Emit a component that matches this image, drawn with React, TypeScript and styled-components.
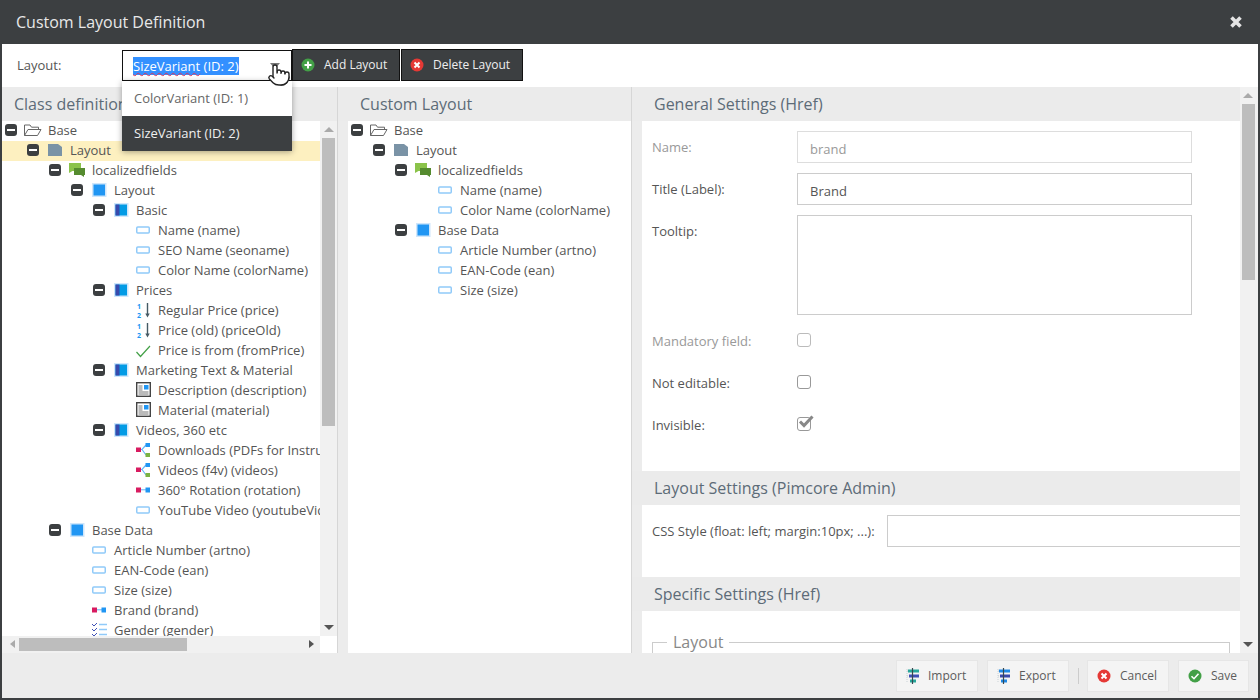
import React from "react";
import styled, { createGlobalStyle } from "styled-components";
import { Pointer } from "lucide-react";

const Global = createGlobalStyle`
  html, body { margin: 0; padding: 0; height: 100%; background: #fff; }
  body { font-family: "Open Sans", "Liberation Sans", sans-serif; font-size: 13px; color: #555; overflow: hidden; }
  * { box-sizing: border-box; }
`;

const Win = styled.div`
  width: 1260px; height: 700px; display: flex; flex-direction: column;
  border: 2px solid #3c3f41; border-top: 0; background: #ececec; overflow: hidden; position: relative;
`;
const TitleBar = styled.header`
  height: 44px; flex: none; background: #3c3f41; margin: 0 -2px; padding: 0 17px 0 16px;
  display: flex; align-items: center; justify-content: space-between;
  color: #e8e8e8; font-size: 16px; font-weight: 400;
`;
const Toolbar = styled.div`
  height: 43px; flex: none; background: #fff; display: flex; align-items: flex-start; padding: 5px 0 0 15px;
`;
const ToolLabel = styled.span`
  width: 105px; line-height: 32px; font-size: 13px; color: #555; flex: none;
`;
const Combo = styled.div`
  width: 170px; height: 31px; margin-top: 1px; border: 1px solid #111; background: #fff; padding: 0 11px 0 10px;
  display: flex; align-items: center; justify-content: space-between; position: relative; flex: none;
`;
const Selected = styled.span`
  background: #3390ff; color: #fff; font-size: 13px; line-height: 18px; white-space: nowrap;
`;
const Wavy = styled.span`
  text-decoration: underline wavy #d8345f 1px; text-underline-offset: 1px;
`;
const Caret = styled.span`
  width: 0; height: 0; border-left: 5px solid transparent; border-right: 5px solid transparent;
  border-top: 6px solid #777;
`;
const Hand = styled.span`
  position: absolute; left: 144px; top: 12px; display: block; line-height: 0; z-index: 4;
`;
const Menu = styled.div`
  position: absolute; left: 120px; top: 81px; width: 170px; z-index: 3; background: #fff;
  box-shadow: 0 1px 6px rgba(0,0,0,.35);
`;
const MenuItem = styled.div<{ $active?: boolean }>`
  height: 35px; line-height: 35px; padding-left: 12px; font-size: 13px;
  background: ${p => (p.$active ? "#3c3f41" : "#fff")};
  color: ${p => (p.$active ? "#f0f0f0" : "#666")};
`;
const DarkBtn = styled.button<{ $w: number }>`
  width: ${p => p.$w}px; height: 32px; border: 1px solid #111; background: #3c3f41; color: #eee; font: 12px "Open Sans", sans-serif;
  display: flex; align-items: center; gap: 9px; padding: 0 0 1px 8px; margin: 0 1px 0 0; flex: none;
`;
const Columns = styled.div`
  height: 566px; flex: none; display: flex; align-items: stretch;
`;
const LeftCol = styled.section`
  width: 336px; flex: none; display: flex; flex-direction: column; border-right: 1px solid #d6d6d6;
`;
const MidCol = styled.section`
  width: 294px; flex: none; display: flex; flex-direction: column; border-right: 1px solid #d6d6d6;
`;
const RightCol = styled.section`
  flex: 1; min-width: 0; display: flex;
`;
const PanelHead = styled.h2`
  height: 34px; flex: none; margin: 0; padding: 0 0 0 12px; background: #ebebeb; color: #5d6b78;
  font-size: 16px; font-weight: 400; line-height: 34px; white-space: nowrap; overflow: hidden;
`;
const MidHead = styled(PanelHead)`
  padding-left: 22px;
`;
const TreeWrap = styled.div`
  flex: 1; min-height: 0; display: flex; background: #fff;
`;
const TreeArea = styled.div`
  flex: 1; min-width: 0; overflow: hidden; background: #fff;
`;
const VBar = styled.div`
  width: 17px; flex: none; background: #f1f1f1; display: flex; flex-direction: column; align-items: center;
`;
const ThumbV = styled.div<{ $h: number; $gap: number }>`
  width: 13px; height: ${p => p.$h}px; margin-top: ${p => p.$gap}px; background: #bdbdbd; flex: none;
`;
const HBar = styled.div`
  height: 17px; flex: none; display: flex; background: #fff;
`;
const HTrack = styled.div`
  flex: 1; background: #f1f1f1; display: flex; align-items: center; padding-left: 17px; position: relative;
`;
const ThumbH = styled.div`
  width: 168px; height: 13px; background: #bdbdbd;
`;
const Corner = styled.div`
  width: 17px; flex: none; background: #fff;
`;
const Arrow = styled.span<{ $dir: "up" | "down" | "left" | "right" }>`
  width: 0; height: 0; flex: none; border: 4px solid transparent;
  ${p => p.$dir === "up" && `border-top-width:0;border-left-width:5px;border-right-width:5px;border-bottom:5px solid #aaa;margin-top:6px;`}
  ${p => p.$dir === "down" && `border-bottom-width:0;border-left-width:5px;border-right-width:5px;border-top:5px solid #555;margin-top:auto;margin-bottom:6px;`}
  ${p => p.$dir === "left" && `border-left-width:0;border-right:5px solid #aaa;position:absolute;left:8px;top:4px;`}
  ${p => p.$dir === "right" && `border-right-width:0;border-left:5px solid #555;position:absolute;right:6px;top:4px;`}
`;
const Row = styled.div<{ $level: number; $sel?: boolean }>`
  height: 20px; padding-bottom: 2px; display: flex; align-items: center; white-space: nowrap; font-size: 13px; color: #555;
  padding-left: ${p => 3 + p.$level * 22}px; background: ${p => (p.$sel ? "#fdf0c0" : "transparent")};
`;
const Toggle = styled.span`
  width: 12px; height: 12px; flex: none; border-radius: 3px; background: #3c3f41; display: flex; align-items: center; justify-content: center;
  &::before { content: ""; width: 8px; height: 2px; background: #fff; }
`;
const NoToggle = styled.span`
  width: 12px; flex: none;
`;
const IconBox = styled.span`
  width: 16px; height: 16px; margin: 0 6px 0 9px; flex: none; display: block; line-height: 0;
  svg { overflow: visible; }
`;
const MidBody = styled.div`
  flex: 1; min-height: 0; padding-left: 10px; display: flex;
`;
const RightMain = styled.div`
  flex: 1; min-width: 0; overflow: hidden; display: flex; flex-direction: column;
`;
const SecHead = styled(PanelHead)`
  padding-left: 22px;
`;
const SecBody = styled.div<{ $h: number }>`
  margin-left: 10px; background: #fff; height: ${p => p.$h}px; flex: none; padding: 10px 0 0 10px; overflow: hidden;
`;
const FormRow = styled.div<{ $top?: boolean }>`
  display: flex; align-items: ${p => (p.$top ? "flex-start" : "center")}; min-height: 32px; margin-bottom: 10px;
`;
const FieldLabel = styled.label<{ $off?: boolean; $w?: number; $top?: boolean }>`
  width: ${p => p.$w ?? 145}px; flex: none; font-size: 13px; line-height: 18px; color: ${p => (p.$off ? "#999" : "#555")}; white-space: nowrap;
  padding-top: ${p => (p.$top ? 7 : 0)}px;
`;
const Input = styled.div<{ $off?: boolean }>`
  width: 395px; height: 32px; border: 1px solid ${p => (p.$off ? "#ddd" : "#ccc")}; padding: 0 12px; line-height: 35px;
  font-size: 13px; color: ${p => (p.$off ? "#999" : "#555")}; background: #fff;
`;
const TextArea = styled(Input)`
  height: 100px;
`;
const WideInput = styled(Input)`
  width: 400px; flex: none; margin-left: 0;
`;
const Check = styled.span<{ $off?: boolean }>`
  width: 14px; height: 14px; display: block; position: relative; border: 1.5px solid ${p => (p.$off ? "#bbb" : "#999")}; border-radius: 3px; background: #fff; margin-top: -2px;
`;
const CheckMark = styled.svg`
  position: absolute; left: 0; top: -3px; overflow: visible;
`;
const Fieldset = styled.div`
  margin-top: 21px; width: 578px; height: 60px; border: 1px solid #ccc; position: relative;
`;
const Legend = styled.span`
  position: absolute; left: 14px; top: -11px; padding: 0 6px; font-size: 16px; line-height: 20px; background: #fff; color: #888;
`;
const Footer = styled.footer`
  flex: 1; display: flex; justify-content: flex-end; align-items: flex-start; padding: 7px 9px 0 0; gap: 9px;
`;
const FootBtn = styled.button<{ $w: number }>`
  width: ${p => p.$w}px; height: 32px; border: 1px solid #e6e6e6; background: #f4f4f4; color: #5c5c5c; font: 12px "Open Sans", sans-serif;
  display: flex; align-items: center; gap: 9px; padding: 0 0 1px 9px; flex: none;
`;
const Sep = styled.span`
  width: 1px; height: 16px; margin: 8px -1px 0 0; background: #ccc; flex: none;
`;
const RightScroll = styled(VBar)`
  width: 18px; padding-right: 2px;
`;
const NumText = styled.text`
  font: 700 7px "Open Sans", sans-serif; fill: #2196f3;
`;

type K = "folder" | "page" | "chat" | "square" | "panel" | "text" | "num" | "check" | "wys" | "multi" | "single" | "list";

const Ico = ({ k }: { k: K }) => {
  const p = { width: 16, height: 16, viewBox: "0 0 16 16" };
  switch (k) {
    case "folder":
      return <svg width={18} height={16} viewBox="2 0 18 16" fill="none" stroke="#666" strokeWidth="1"><path d="M0.5 13.5V3h5.5l1.5 2.2h7v2.3M0.5 13.5h13l3.5-6H4z" /></svg>;
    case "page":
      return <svg {...p}><path d="M0 2h10l4 3v9H0z" fill="#7a93a6" /></svg>;
    case "chat":
      return <svg {...p}><path d="M-1 1h12v8H2.5L-1 11z" fill="#8bc34a" /><path d="M4 6h11v7h-1v2l-3-2H4z" fill="#558b2f" /></svg>;
    case "square":
      return <svg {...p}><rect x="0" y="1" width="14.5" height="14" fill="#cfe6fb" /><rect x="1.5" y="2.5" width="11.5" height="11" fill="#2196f3" /></svg>;
    case "panel":
      return <svg {...p}><rect x="0" y="1" width="14.5" height="14" fill="#cfe6fb" /><rect x="1.5" y="2.5" width="11.5" height="11" fill="#039be5" /><rect x="1.5" y="2.5" width="4" height="11" fill="#3949ab" /></svg>;
    case "text":
      return <svg {...p}><rect x=".75" y="5" width="12.5" height="6" rx="1" fill="#fff" stroke="#90caf9" strokeWidth="1.5" /></svg>;
    case "num":
      return <svg {...p}>
        <NumText x="1" y="6.5">1</NumText>
        <NumText x="1" y="15.5">2</NumText>
        <path d="M11.5 1v11" stroke="#455a64" strokeWidth="1.4" /><path d="M9.3 11.5l2.2 4 2.2-4z" fill="#455a64" />
      </svg>;
    case "check":
      return <svg {...p}><path d="M0.5 10l4 4.5L14 4" fill="none" stroke="#43a047" strokeWidth="1.2" /></svg>;
    case "wys":
      return <svg {...p}><rect x=".7" y=".7" width="13.6" height="13.6" fill="#fff" stroke="#444" strokeWidth="1.4" /><rect x="8" y="3" width="4.5" height="4.5" fill="#2196f3" /><path d="M2.5 4h4M2.5 6h4M2.5 8h4M2.5 10h10M2.5 12h10" stroke="#777" /></svg>;
    case "multi":
      return <svg {...p}><path d="M4 7.5h2L10 3M6 7.5l4 5.5" stroke="#64b5f6" strokeWidth="1.2" fill="none" /><rect x="0" y="5.5" width="5" height="4.5" fill="#d81b60" /><rect x="9.5" y="1" width="4.5" height="4" fill="#2196f3" /><rect x="9.5" y="11" width="4.5" height="4" fill="#7cb342" /></svg>;
    case "single":
      return <svg {...p}><path d="M4 7.8h6" stroke="#64b5f6" /><rect x="0" y="5.5" width="5" height="5" fill="#d81b60" /><rect x="9.5" y="5.5" width="4.5" height="5" fill="#2196f3" /></svg>;
    case "list":
      return <svg {...p}><path d="M0 2l2 2 3-3M0 7l2 2 3-3M0 12l2 2 3-3" fill="none" stroke="#3f51b5" /><path d="M7 2.5h8M7 7.5h8M7 12.5h8" stroke="#90caf9" strokeWidth="1.3" /></svg>;
  }
};

type Node = [number, K, string, boolean?, boolean?];
const classTree: Node[] = [
  [0, "folder", "Base", true],
  [1, "page", "Layout", true, true],
  [2, "chat", "localizedfields", true],
  [3, "square", "Layout", true],
  [4, "panel", "Basic", true],
  [5, "text", "Name (name)"],
  [5, "text", "SEO Name (seoname)"],
  [5, "text", "Color Name (colorName)"],
  [4, "panel", "Prices", true],
  [5, "num", "Regular Price (price)"],
  [5, "num", "Price (old) (priceOld)"],
  [5, "check", "Price is from (fromPrice)"],
  [4, "panel", "Marketing Text & Material", true],
  [5, "wys", "Description (description)"],
  [5, "wys", "Material (material)"],
  [4, "panel", "Videos, 360 etc", true],
  [5, "multi", "Downloads (PDFs for Instructions)"],
  [5, "multi", "Videos (f4v) (videos)"],
  [5, "single", "360° Rotation (rotation)"],
  [5, "text", "YouTube Video (youtubeVideo)"],
  [2, "square", "Base Data", true],
  [3, "text", "Article Number (artno)"],
  [3, "text", "EAN-Code (ean)"],
  [3, "text", "Size (size)"],
  [3, "single", "Brand (brand)"],
  [3, "list", "Gender (gender)"],
];
const customTree: Node[] = [
  [0, "folder", "Base", true],
  [1, "page", "Layout", true],
  [2, "chat", "localizedfields", true],
  [3, "text", "Name (name)"],
  [3, "text", "Color Name (colorName)"],
  [2, "square", "Base Data", true],
  [3, "text", "Article Number (artno)"],
  [3, "text", "EAN-Code (ean)"],
  [3, "text", "Size (size)"],
];

const Tree = ({ nodes }: { nodes: Node[] }) => (
  <>
    {nodes.map(([level, k, label, open, sel], i) => (
      <Row key={i} $level={level} $sel={sel}>
        {open ? <Toggle /> : <NoToggle />}
        <IconBox><Ico k={k} /></IconBox>
        {label}
      </Row>
    ))}
  </>
);

const Round = ({ c, kind }: { c: string; kind: "plus" | "x" | "ok" }) => (
  <svg width="14" height="14" viewBox="0 0 14 14">
    <circle cx="7" cy="7" r="6.5" fill={c} />
    {kind === "plus" && <path d="M7 3.5v7M3.5 7h7" stroke="#fff" strokeWidth="2" />}
    {kind === "x" && <path d="M4.5 4.5l5 5M9.5 4.5l-5 5" stroke="#fff" strokeWidth="2" />}
    {kind === "ok" && <path d="M3.5 7.2l2.5 2.5 4.5-5" stroke="#fff" strokeWidth="1.6" fill="none" />}
  </svg>
);

const Bars = ({ a, b }: { a: string; b: string }) => (
  <svg width="13" height="16" viewBox="0 0 13 16">
    <path d="M1 1v14M1 3h12M1 8h12" stroke="#b0bec5" strokeWidth=".6" strokeDasharray="1 1" />
    <rect x="2" y="1.5" width="11" height="3" fill={a} />
    <rect x="3" y="6.5" width="10" height="3" fill={b} />
    <rect x="4" y="11.5" width="6" height="3" fill={a} />
    <path d="M6.5 0v16" stroke="#37474f" strokeWidth="1.2" />
  </svg>
);

export default function App() {
  return (
    <Win>
      <Global />
      <TitleBar>
        Custom Layout Definition
        <svg width="14" height="14" viewBox="0 0 14 14"><path d="M2.5 2.5l9 9M11.5 2.5l-9 9" stroke="#e4e4e4" strokeWidth="3.6" /></svg>
      </TitleBar>
      <Toolbar>
        <ToolLabel>Layout:</ToolLabel>
        <Combo>
          <Selected><Wavy>SizeVariant</Wavy> (ID: 2)</Selected>
          <Caret />
          <Hand><Pointer size={24} fill="#fff" stroke="#222" strokeWidth={1.4} /></Hand>
        </Combo>
        <DarkBtn $w={108}><Round c="#43a047" kind="plus" />Add Layout</DarkBtn>
        <DarkBtn $w={122}><Round c="#e53935" kind="x" />Delete Layout</DarkBtn>
      </Toolbar>
      <Menu>
        <MenuItem>ColorVariant (ID: 1)</MenuItem>
        <MenuItem $active>SizeVariant (ID: 2)</MenuItem>
      </Menu>
      <Columns>
        <LeftCol>
          <PanelHead>Class definition</PanelHead>
          <TreeWrap>
            <TreeArea><Tree nodes={classTree} /></TreeArea>
            <VBar>
              <Arrow $dir="up" />
              <ThumbV $h={288} $gap={6} />
              <Arrow $dir="down" />
            </VBar>
          </TreeWrap>
          <HBar>
            <HTrack>
              <Arrow $dir="left" />
              <ThumbH />
              <Arrow $dir="right" />
            </HTrack>
            <Corner />
          </HBar>
        </LeftCol>
        <MidCol>
          <MidHead>Custom Layout</MidHead>
          <MidBody>
            <TreeArea><Tree nodes={customTree} /></TreeArea>
          </MidBody>
        </MidCol>
        <RightCol>
          <RightMain>
            <SecHead>General Settings (Href)</SecHead>
            <SecBody $h={350}>
              <FormRow><FieldLabel $off>Name:</FieldLabel><Input $off>brand</Input></FormRow>
              <FormRow><FieldLabel>Title (Label):</FieldLabel><Input>Brand</Input></FormRow>
              <FormRow $top><FieldLabel $top>Tooltip:</FieldLabel><TextArea /></FormRow>
              <FormRow><FieldLabel $off>Mandatory field:</FieldLabel><Check $off /></FormRow>
              <FormRow><FieldLabel>Not editable:</FieldLabel><Check /></FormRow>
              <FormRow>
                <FieldLabel>Invisible:</FieldLabel>
                <Check>
                  <CheckMark width="16" height="14" viewBox="0 0 16 14"><path d="M2 6.5l4 4 8.5-9" fill="none" stroke="#888" strokeWidth="3" /></CheckMark>
                </Check>
              </FormRow>
            </SecBody>
            <SecHead>Layout Settings (Pimcore Admin)</SecHead>
            <SecBody $h={72}>
              <FormRow><FieldLabel $w={235}>CSS Style (float: left; margin:10px; ...):</FieldLabel><WideInput /></FormRow>
            </SecBody>
            <SecHead>Specific Settings (Href)</SecHead>
            <SecBody $h={42}>
              <Fieldset><Legend>Layout</Legend></Fieldset>
            </SecBody>
          </RightMain>
          <RightScroll>
            <Arrow $dir="up" />
            <ThumbV $h={176} $gap={6} />
            <Arrow $dir="down" />
          </RightScroll>
        </RightCol>
      </Columns>
      <Footer>
        <FootBtn $w={82}><Bars a="#26a69a" b="#3f51b5" />Import</FootBtn>
        <FootBtn $w={82}><Bars a="#1e88e5" b="#3949ab" />Export</FootBtn>
        <Sep />
        <FootBtn $w={82}><Round c="#e53935" kind="x" />Cancel</FootBtn>
        <FootBtn $w={71}><Round c="#43a047" kind="ok" />Save</FootBtn>
      </Footer>
    </Win>
  );
}
